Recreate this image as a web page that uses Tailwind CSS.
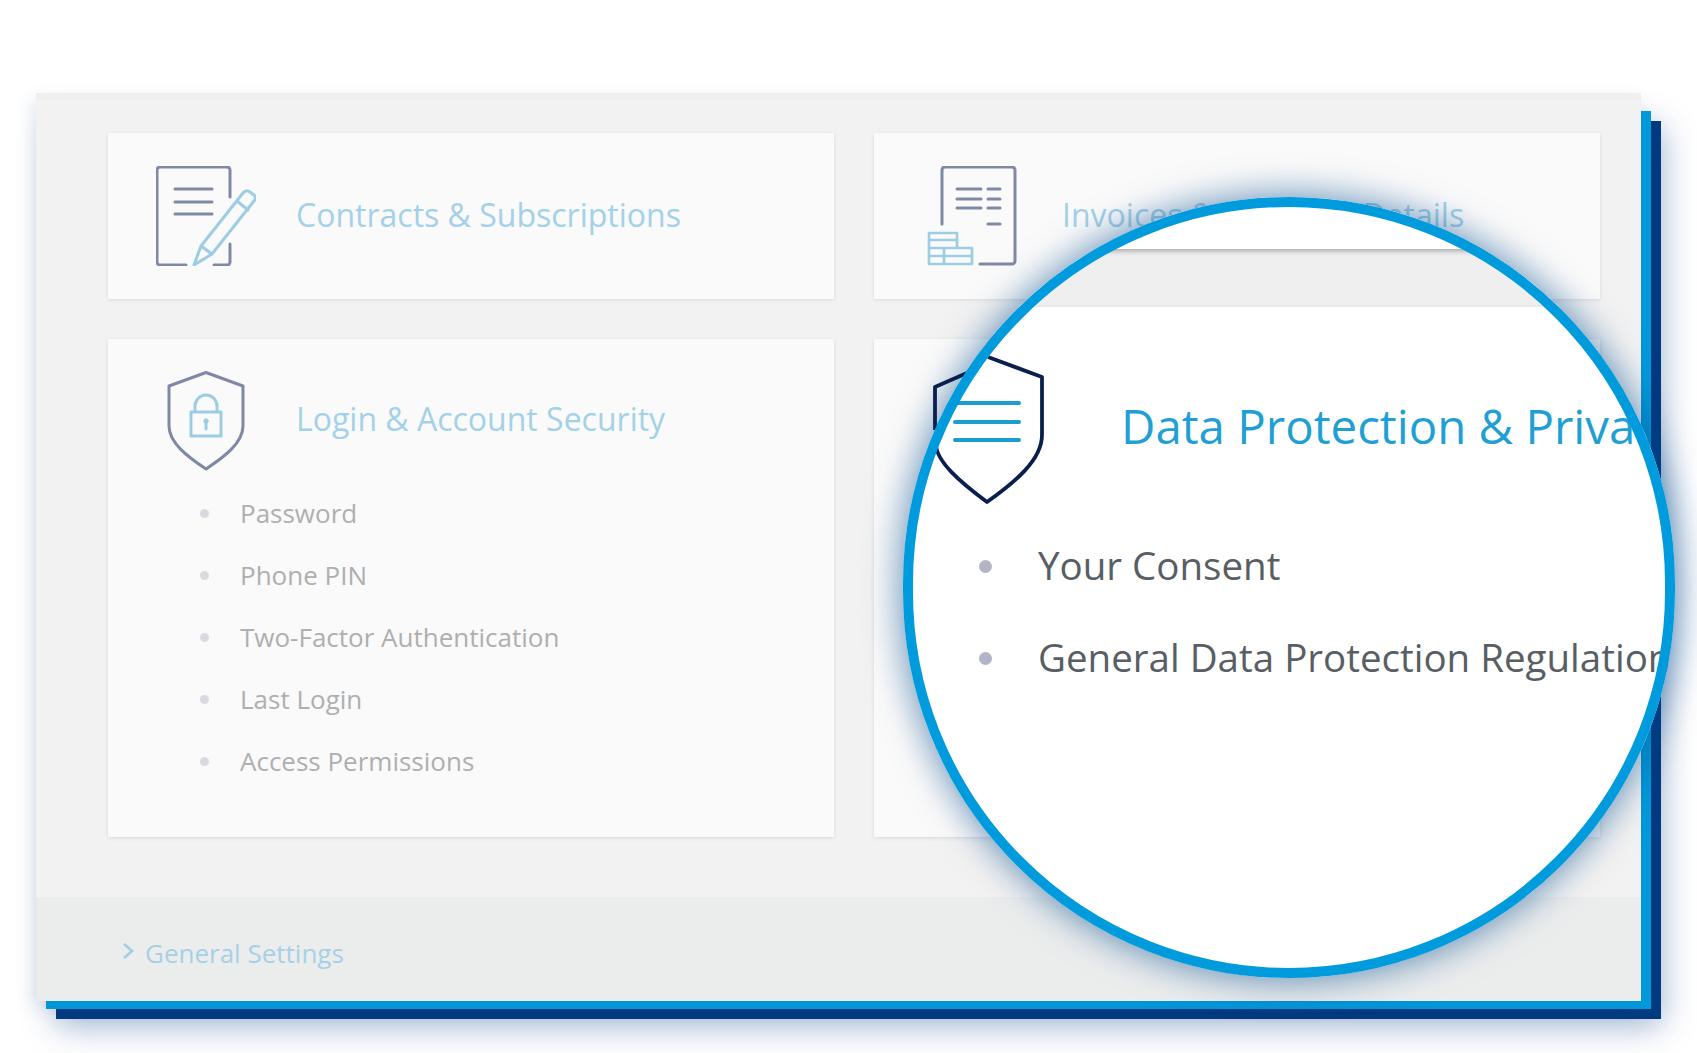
<!DOCTYPE html>
<html lang="en">

<head>
  <meta charset="UTF-8" />
  <title>Account settings</title>
  <script src="https://cdn.jsdelivr.net/npm/@tailwindcss/browser@4"></script>
</head>

<body class="bg-white font-['Open_Sans',sans-serif]">
  <main class="relative w-[1697px] h-[1053px] overflow-hidden pl-[36px] pt-[93px]">

    <!-- offset blue layers behind the panel -->
    <div class="relative w-[1605px] h-[908px]">
      <div class="absolute left-[20px] top-[28px] w-[1605px] h-[898px] bg-[#003a80] shadow-[0_6px_32px_rgba(0,56,130,0.4)]"></div>
      <div class="absolute left-[10px] top-[18px] w-[1605px] h-[898px] bg-[#009bdc]"></div>

      <!-- panel -->
      <div class="relative flex flex-col h-full bg-[#f2f2f2] shadow-[-4px_6px_16px_rgba(60,90,150,0.14)]">
        <div class="h-[7px] bg-[#efefef]"></div>

        <div class="flex-1 pl-[72px] pr-[41px] pt-[33px]">
          <div class="grid grid-cols-[726px_726px] grid-rows-[166px_498px] gap-[40px]">

            <!-- Contracts -->
            <section class="flex items-center gap-[40px] pl-[48px] bg-[#fafafa] shadow-[0_1px_4px_rgba(0,0,0,0.1)]">
              <svg class="w-[100px] h-[100px] shrink-0" viewBox="0 0 100 100" fill="none" stroke-width="3" stroke-linecap="round" stroke-linejoin="round">
                <path stroke="#7f89a6" d="M30 99H4a3 3 0 0 1-3-3V4a3 3 0 0 1 3-3h67a3 3 0 0 1 3 3v27M74 78v18a3 3 0 0 1-3 3H58M19 23h37M19 36h37M19 48h37" />
                <path stroke="#9ccde3" d="M38 99l7-19 42-53q3-4 7-1l4 3q3 3 0 6L56 88zM45 80l11 8M81 35l11 9" />
              </svg>
              <h2 class="text-[#a3d1e8] text-[32px] mb-[3px] whitespace-nowrap">Contracts &amp; Subscriptions</h2>
            </section>

            <!-- Invoices -->
            <section class="flex items-center gap-[40px] pl-[48px] bg-[#fafafa] shadow-[0_1px_4px_rgba(0,0,0,0.1)]">
              <svg class="w-[100px] h-[100px] shrink-0" viewBox="0 0 100 100" fill="none" stroke-width="3" stroke-linecap="round" stroke-linejoin="round">
                <path stroke="#7f89a6" d="M20 58V4a3 3 0 0 1 3-3h67a3 3 0 0 1 3 3v91a3 3 0 0 1-3 3H58M35 23h24M35 33h24M35 42h24M66 23h12M66 33h12M66 42h12M66 58h12" />
                <path stroke="#9ccde3" stroke-width="2.6" d="M7 67h28v15h15v16H7zM7 74h28M7 82h28M7 90h43M22 82v16" />
              </svg>
              <h2 class="text-[#a3d1e8] text-[32px] mb-[3px] whitespace-nowrap">Invoices &amp; Payment Details</h2>
            </section>

            <!-- Login -->
            <section class="bg-[#fafafa] shadow-[0_1px_4px_rgba(0,0,0,0.1)] pt-[32px]">
              <div class="flex items-center gap-[40px] pl-[48px]">
                <svg class="w-[100px] h-[100px] shrink-0" viewBox="0 0 100 100" fill="none" stroke-width="3" stroke-linecap="round" stroke-linejoin="round">
                  <path stroke="#7f89a6" d="M50 1.5L87 15v40c0 17-19 31-37 43C32 86 13 72 13 55V15z" />
                  <path stroke="#9ccde3" d="M35 41h30v24H35zM39 41v-6a11 11 0 0 1 22 0v6M50 50v8" />
                  <circle cx="50" cy="50" r="2.2" fill="#9ccde3" stroke="#9ccde3" stroke-width="1" />
                </svg>
                <h2 class="text-[#a3d1e8] text-[32px] mb-[5px] whitespace-nowrap">Login &amp; Account Security</h2>
              </div>
              <ul class="mt-[11px] pl-[92px] text-[26px] text-[#adafb1]">
                <li class="flex items-center h-[62px]"><span class="w-[9px] h-[9px] rounded-full bg-[#d8dae0] mr-[31px]"></span>Password</li>
                <li class="flex items-center h-[62px]"><span class="w-[9px] h-[9px] rounded-full bg-[#d8dae0] mr-[31px]"></span>Phone PIN</li>
                <li class="flex items-center h-[62px]"><span class="w-[9px] h-[9px] rounded-full bg-[#d8dae0] mr-[31px]"></span>Two-Factor Authentication</li>
                <li class="flex items-center h-[62px]"><span class="w-[9px] h-[9px] rounded-full bg-[#d8dae0] mr-[31px]"></span>Last Login</li>
                <li class="flex items-center h-[62px]"><span class="w-[9px] h-[9px] rounded-full bg-[#d8dae0] mr-[31px]"></span>Access Permissions</li>
              </ul>
            </section>

            <!-- Data protection, shown magnified by the lens -->
            <section class="bg-[#fafafa] shadow-[0_1px_4px_rgba(0,0,0,0.1)]"></section>
          </div>
        </div>

        <footer class="flex items-center gap-[11px] h-[104px] pl-[87px] bg-[#ebeded] text-[#a6d0e5] text-[26px]">
          <svg class="w-[11px] h-[16px] mt-[4px]" viewBox="0 0 11 16" fill="none" stroke="#a0cde3" stroke-width="2.6">
            <path d="M1 1l8 7-8 7" />
          </svg>
          <span class="pt-[9px]">General Settings</span>
        </footer>
      </div>
    </div>

    <!-- magnifier -->
    <div class="absolute left-[903px] top-[197px] w-[772px] h-[781px]">
      <div class="absolute inset-0 rounded-full bg-white overflow-hidden shadow-[0_0_34px_4px_rgba(0,72,140,0.55)]">
        <div class="relative h-[52px] bg-white shadow-[0_2px_5px_rgba(0,0,0,0.3)]"></div>
        <div class="h-[58px] bg-[#efefef] border-b-2 border-[#e9e9e9]"></div>
        <h2 class="mt-[89px] pl-[218px] text-[#1f9fd5] text-[47.4px] leading-[60px] whitespace-nowrap">Data Protection &amp; Privacy</h2>
        <ul class="mt-[64px] pl-[76px] text-[38.5px] text-[#585e63] whitespace-nowrap">
          <li class="flex items-center h-[92px]"><span class="w-[13px] h-[13px] shrink-0 rounded-full bg-[#b3b4c6] mr-[46px]"></span>Your Consent</li>
          <li class="flex items-center h-[92px]"><span class="w-[13px] h-[13px] shrink-0 rounded-full bg-[#b3b4c6] mr-[46px]"></span>General Data Protection Regulation</li>
        </ul>
      </div>

      <svg class="absolute left-[27px] top-[153px] w-[120px] h-[160px]" viewBox="0 0 120 160" fill="none" stroke-width="3.8" stroke-linejoin="round">
        <path stroke="#0a1f4e" d="M5 80V37l32-14M58 7l54 20v58c0 25-27 47-55 67C30 132 7 112 6 95" />
        <path stroke="#1a9dd0" stroke-width="4" stroke-linecap="round" d="M25 53h64M25 72h64M25 90h64" />
      </svg>

      <div class="absolute inset-0 rounded-full border-[10px] border-[#009bdc]"></div>
    </div>
  </main>
</body>

</html>
